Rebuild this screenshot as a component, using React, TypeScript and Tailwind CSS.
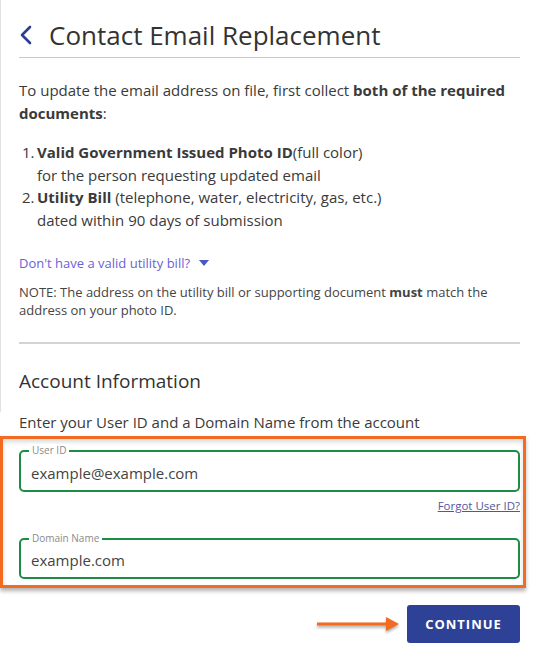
import React from "react";

export default function App() {
  return (
    <div className="w-[536px] h-[657px] bg-white overflow-hidden font-['Open_Sans',sans-serif] text-[#3a3a3a]">
      <div className="border-l border-[#e2e2e2] pl-[18px] pr-[16px] pb-[18px]">
        <div className="pt-[16px] flex items-center h-[58px] pb-[4px] border-b border-[#c8c8c8]">
          <svg width="14" height="20" viewBox="0 0 14 20" className="ml-[0px] mr-[16px] shrink-0">
            <path d="M11 2 L3 10 L11 18" fill="none" stroke="#2c3d94" strokeWidth="2.6" strokeLinecap="round" strokeLinejoin="round" />
          </svg>
          <h1 className="text-[26px] leading-[36px] text-[#333] font-normal">Contact Email Replacement</h1>
        </div>
        <p className="mt-[21px] text-[15px] leading-[23px]">
          To update the email address on file, first collect <b className="font-bold">both of the required documents</b>:
        </p>
        <ol className="mt-[16px] text-[15px] leading-[22.6px] pl-[3px]">
          <li className="flex">
            <span className="w-[15px] shrink-0">1.</span>
            <span>
              <b className="font-bold">Valid Government Issued Photo ID</b>(full color)
              <br />
              for the person requesting updated email
            </span>
          </li>
          <li className="flex">
            <span className="w-[15px] shrink-0">2.</span>
            <span>
              <b className="font-bold">Utility Bill</b> (telephone, water, electricity, gas, etc.)
              <br />
              dated within 90 days of submission
            </span>
          </li>
        </ol>
        <div className="mt-[23px] flex items-center text-[13px] leading-[18px] text-[#6b5fd6]">
          <span>Don't have a valid utility bill?</span>
          <svg width="10" height="6" viewBox="0 0 10 6" className="ml-[9px]">
            <path d="M0 0 L10 0 L5 6 Z" fill="#4a57c4" />
          </svg>
        </div>
        <p className="mt-[11px] text-[13px] leading-[18px] text-[#444]">
          NOTE: The address on the utility bill or supporting document <b className="font-bold">must</b> match the address on your photo ID.
        </p>
        <div className="mt-[23px] border-t-2 border-[#d4d4d4]" />
        <h2 className="mt-[24px] text-[19px] leading-[26px] text-[#333] font-normal">Account Information</h2>
      </div>
      <div className="pl-[19px] pr-[16px]">
        <p className="-mt-[1px] text-[15px] leading-[22px]">Enter your User ID and a Domain Name from the account</p>
      </div>
      <div className="mt-[3px] w-[526px] border-[3px] border-[#f36a21] pt-[11px] pl-[16px] pr-[3px] pb-[6px] shadow-[0_3px_4px_rgba(0,0,0,0.3),inset_0_3px_4px_rgba(0,0,0,0.15)]">
        <div className="relative h-[42px] border-2 border-[#1e8c44] rounded-[5px] flex items-center px-[10px] pt-[3px]">
          <span className="absolute -top-[8px] left-[8px] bg-white px-[3px] text-[10px] leading-[12px] text-[#8a8a8a]">User ID</span>
          <span className="text-[15px] text-[#444]">example@example.com</span>
        </div>
        <div className="mt-[6px] flex justify-end">
          <span className="text-[11.5px] leading-[16px] text-[#55559c] underline">Forgot User ID?</span>
        </div>
        <div className="mt-[24px] relative h-[41px] border-2 border-[#1e8c44] rounded-[5px] flex items-center px-[10px] pt-[3px]">
          <span className="absolute -top-[8px] left-[8px] bg-white px-[3px] text-[10px] leading-[12px] text-[#8a8a8a]">Domain Name</span>
          <span className="text-[15px] text-[#444]">example.com</span>
        </div>
      </div>
      <div className="mt-[17px] pr-[16px] flex justify-end items-center">
        <svg width="84" height="18" viewBox="0 0 84 18" className="mr-[7px] drop-shadow-[0_2px_1.5px_rgba(0,0,0,0.35)]">
          <path d="M1 7.5 H70 V2 L83 9 L70 16 V10.5 H1 Z" fill="#f36a21" />
        </svg>
        <button className="w-[113px] h-[38px] rounded-[3px] bg-[#2d4297] text-white text-[13px] font-bold tracking-[1px]">CONTINUE</button>
      </div>
    </div>
  );
}
